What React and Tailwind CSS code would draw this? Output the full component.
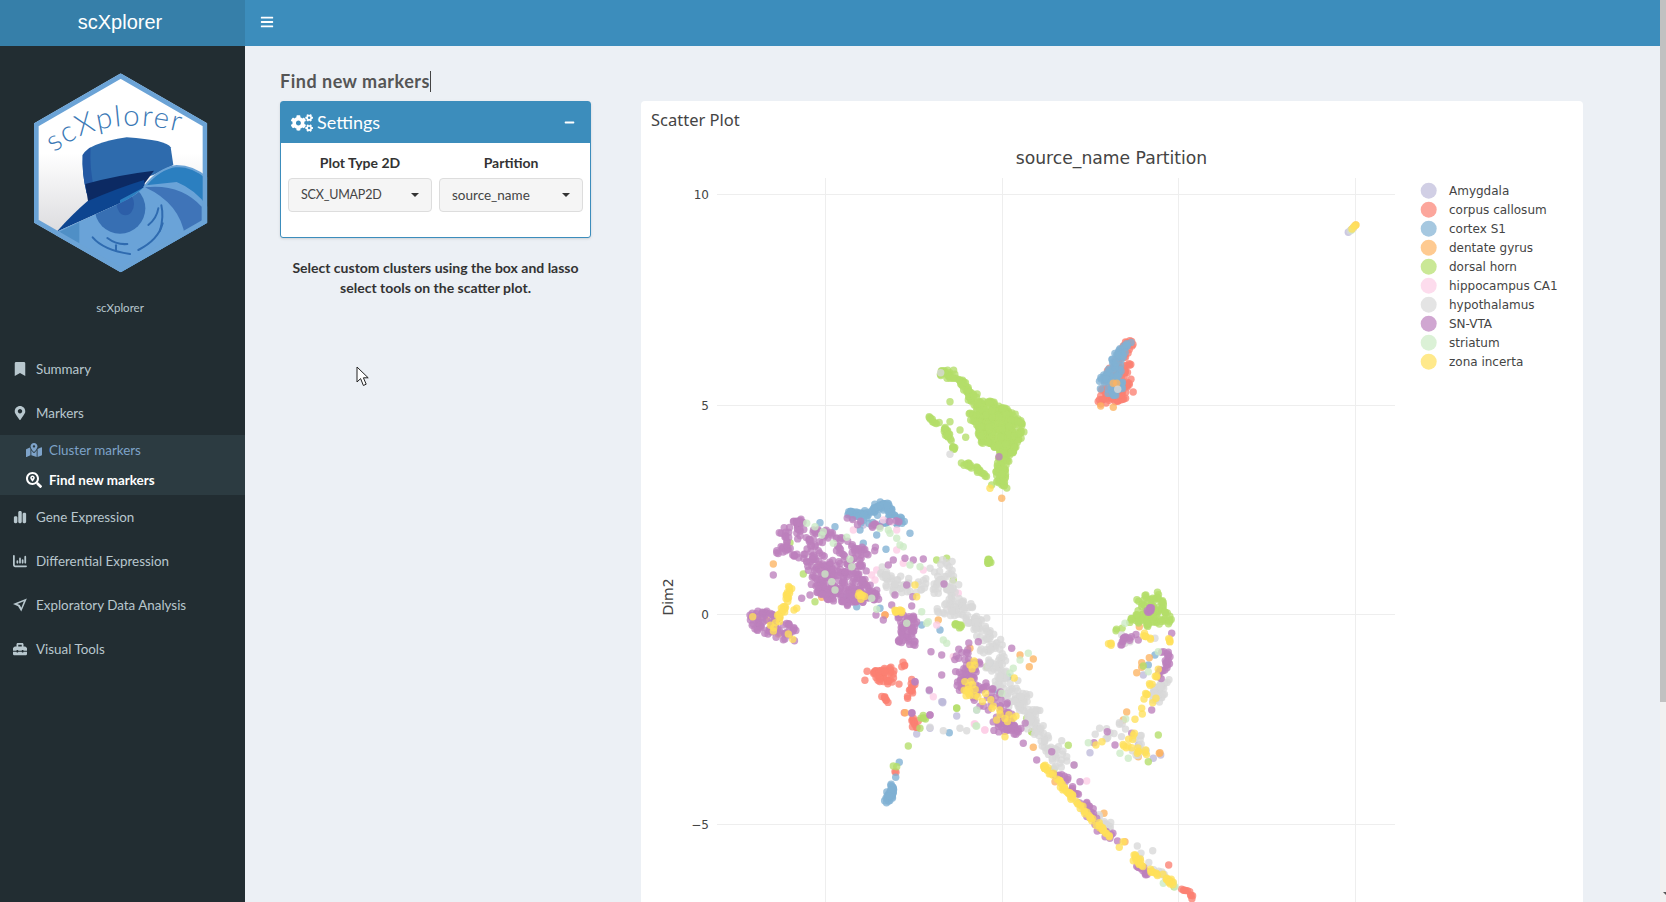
import React from "react";
import { FaBookmark, FaMapMarkerAlt, FaMapMarkedAlt, FaSearchLocation, FaToolbox, FaCogs, FaMinus, FaBars } from "react-icons/fa";
import { FaChartSimple, FaChartColumn } from "react-icons/fa6";

const COLORS = ["#BEBADA", "#FB8072", "#80B1D3", "#FDB462", "#B3DE69", "#FCCDE5", "#D9D9D9", "#BC80BD", "#CCEBC5", "#FFE05A"];
const NAMES = ["Amygdala", "corpus callosum", "cortex S1", "dentate gyrus", "dorsal horn", "hippocampus CA1", "hypothalamus", "SN-VTA", "striatum", "zona incerta"];
const [AM, CC, CX, DG, DH, HP, HY, SN, ST, ZI] = [0, 1, 2, 3, 4, 5, 6, 7, 8, 9];

let seed = 12345;
const rnd = () => {
  seed = (seed * 1664525 + 1013904223) % 4294967296;
  return seed / 4294967296;
};
const gauss = () => (rnd() + rnd() + rnd() - 1.5) / 1.5 * 1.6;

const raw = [];
const push = (t, x, y) => raw.push({ t, x, y });
const line = (t, n0, origin, p, s0 = 3) => {
  const n = Math.round(n0 * 1.3);
  const s = s0 * 1.2;
  const m = p.map(([x, y]) => [origin[0] + x / 3, origin[1] + y / 3]);
  const lens = [];
  let L = 0;
  for (let i = 1; i < m.length; i++) {
    const d = Math.hypot(m[i][0] - m[i - 1][0], m[i][1] - m[i - 1][1]);
    lens.push(d);
    L += d;
  }
  for (let k = 0; k < n; k++) {
    let r = rnd() * L;
    let i = 0;
    while (i < lens.length - 1 && r > lens[i]) {
      r -= lens[i];
      i++;
    }
    const f = r / lens[i];
    push(t, m[i][0] + (m[i + 1][0] - m[i][0]) * f + gauss() * s, m[i][1] + (m[i + 1][1] - m[i][1]) * f + gauss() * s);
  }
};
const poly = (t, n0, origin, p, jitter = 2) => {
  const n = Math.round(n0 * 1.35);
  const m = p.map(([x, y]) => [origin[0] + x / 3, origin[1] + y / 3]);
  const xs = m.map((a) => a[0]);
  const ys = m.map((a) => a[1]);
  const [x0, x1, y0, y1] = [Math.min(...xs), Math.max(...xs), Math.min(...ys), Math.max(...ys)];
  const inside = (x, y) => {
    let c = false;
    for (let i = 0, j = m.length - 1; i < m.length; j = i++) {
      if (m[i][1] > y !== m[j][1] > y && x < ((m[j][0] - m[i][0]) * (y - m[i][1])) / (m[j][1] - m[i][1]) + m[i][0]) c = !c;
    }
    return c;
  };
  let k = 0;
  let guard = 0;
  while (k < n && guard < n * 200) {
    guard++;
    const x = x0 + rnd() * (x1 - x0);
    const y = y0 + rnd() * (y1 - y0);
    if (inside(x, y)) {
      push(t, x + gauss() * jitter, y + gauss() * jitter);
      k++;
    }
  }
};
const dots = (t, origin, list) => list.forEach(([x, y]) => push(t, origin[0] + x / 3, origin[1] + y / 3));

// dorsal horn island
const Z8 = [900, 360];
line(DH, 60, Z8, [[125, 32], [190, 70], [215, 115], [250, 140]], 3.5);
poly(DH, 300, Z8, [[225, 125], [290, 125], [350, 165], [378, 200], [355, 250], [318, 320], [322, 388], [295, 370], [285, 310], [300, 270], [240, 240], [235, 195]], 1.2);
line(DH, 18, Z8, [[210, 160], [235, 190], [250, 240]], 3);
line(DH, 8, Z8, [[85, 175], [110, 188]], 1.6);
line(DH, 18, Z8, [[135, 200], [150, 240], [162, 270]], 2);
line(DH, 18, Z8, [[185, 308], [230, 325], [250, 345], [262, 348]], 2);
dots(DH, Z8, [[150, 125], [210, 160], [212, 180], [230, 195], [180, 210], [197, 232], [150, 185], [248, 250], [290, 365], [275, 375]]);
dots(HY, Z8, [[122, 38], [150, 283]]);
dots(SN, Z8, [[297, 290]]);
dots(ZI, Z8, [[270, 385]]);
dots(DG, Z8, [[305, 415]]);

// corpus / cortex island
const Z7 = [1060, 320];
poly(CC, 100, Z7, [[215, 50], [225, 60], [205, 100], [218, 130], [205, 150], [222, 215], [200, 245], [170, 250], [130, 250], [105, 270], [125, 215], [120, 190], [170, 110], [190, 70]], 1);
poly(CX, 70, Z7, [[200, 58], [214, 70], [190, 110], [190, 140], [198, 180], [178, 228], [130, 228], [115, 180], [140, 150], [165, 100]], 1);
dots(DG, Z7, [[160, 190], [170, 190], [122, 258], [160, 262]]);
dots(HY, Z7, [[173, 208]]);

// big central region
const Z5 = [720, 480];
line(CX, 70, Z5, [[385, 100], [450, 100], [495, 70], [520, 110], [550, 125]], 3);
poly(CX, 12, Z5, [[395, 100], [550, 110], [545, 140], [400, 130]], 1);
dots(CX, Z5, [[420, 150], [470, 165], [570, 160], [430, 190], [498, 208], [380, 350], [480, 385], [410, 380], [345, 140], [300, 128], [660, 450], [605, 435], [865, 590], [830, 630], [810, 550]]);
poly(SN, 240, Z5, [[180, 150], [230, 135], [330, 145], [400, 190], [480, 205], [430, 285], [495, 365], [400, 378], [300, 360], [278, 315], [258, 240], [170, 220]]);
poly(SN, 50, Z5, [[270, 240], [380, 250], [440, 300], [480, 360], [400, 370], [300, 350]], 1);
line(SN, 12, Z5, [[218, 125], [245, 125]], 1.6);
line(SN, 10, Z5, [[380, 125], [460, 130], [540, 125]], 3);
dots(SN, Z5, [[160, 285], [245, 355], [270, 345], [468, 405], [490, 420], [525, 345], [578, 350], [575, 378], [515, 375], [560, 315], [665, 525], [633, 515], [665, 585], [628, 630], [672, 312], [610, 237], [580, 240], [555, 235], [520, 240], [505, 255], [875, 505], [775, 485], [585, 605], [575, 700], [630, 705]]);
poly(SN, 55, Z5, [[85, 400], [150, 392], [230, 450], [236, 490], [150, 470], [105, 450]], 1.5);
line(ZI, 24, Z5, [[208, 315], [200, 370], [185, 400], [160, 445]], 2.6);
dots(ZI, Z5, [[98, 410], [230, 385], [222, 390], [205, 462], [218, 478]]);
dots(DG, Z5, [[115, 420], [140, 420], [175, 462], [160, 252], [300, 258], [305, 352], [435, 312], [495, 405]]);
line(HY, 150, Z5, [[650, 245], [680, 290], [705, 350], [745, 410], [800, 460], [825, 510], [830, 570], [880, 640], [940, 720]], 9);
line(HY, 45, Z5, [[480, 265], [510, 320], [590, 310], [680, 340]], 8);
line(HY, 22, Z5, [[650, 390], [720, 410], [800, 440]], 8);
poly(SN, 42, Z5, [[530, 400], [590, 410], [590, 500], [530, 490], [545, 450]], 1.5);
line(ZI, 7, Z5, [[522, 392], [552, 396]], 1.5);
line(ZI, 6, Z5, [[420, 345], [430, 352]], 2);
dots(ZI, Z5, [[590, 350], [585, 315], [883, 594]]);
line(CC, 36, Z5, [[445, 585], [520, 570], [470, 590], [530, 608]], 4);
line(CC, 10, Z5, [[575, 600], [578, 635], [562, 660]], 2.4);
line(CC, 5, Z5, [[485, 650], [505, 662]], 1.6);
line(CC, 3, Z5, [[545, 560], [555, 545]], 1.6);
dots(CC, Z5, [[495, 405], [553, 698], [580, 715]]);
line(SN, 90, Z5, [[710, 520], [770, 565], [720, 610], [800, 640], [850, 690], [860, 760]], 8);
line(ZI, 22, Z5, [[725, 525], [765, 555], [740, 640], [805, 655], [875, 720]], 5);
dots(DG, Z5, [[750, 505], [900, 525], [940, 537], [928, 560], [655, 420]]);
const stList = [[310, 155], [305, 165], [285, 140], [540, 195], [550, 200], [510, 160], [505, 150], [480, 145], [530, 175], [620, 430], [625, 425], [680, 490], [670, 480], [570, 255], [600, 260], [395, 260], [390, 238], [340, 190], [315, 282], [335, 305], [345, 330], [455, 355], [605, 395], [470, 388], [880, 565], [925, 520], [870, 580], [900, 540], [845, 640], [770, 690], [768, 738], [260, 130], [380, 172], [560, 430]];
dots(ST, Z5, stList);
const hpList = [[465, 300], [455, 285], [470, 270], [530, 210], [550, 250], [400, 150], [530, 150], [610, 270], [650, 435], [715, 340], [700, 530], [795, 750], [765, 732], [640, 650], [515, 125], [490, 120], [690, 380]];
dots(HP, Z5, hpList);
dots(AM, Z5, [[430, 135], [490, 130], [665, 665], [628, 632], [668, 668], [575, 700], [770, 690]]);
line(DH, 7, Z5, [[803, 238], [812, 250]], 1.6);
dots(DH, Z5, [[680, 235], [650, 240], [250, 282], [285, 365], [210, 188], [715, 435], [700, 300], [800, 560], [710, 684], [935, 755], [920, 715]]);
line(DH, 6, Z5, [[705, 430], [725, 440]], 2.4);

// tail
const Z6 = [880, 640];
line(HY, 50, Z6, [[430, 190], [470, 270], [540, 370]], 7);
line(HY, 20, Z6, [[600, 495], [700, 570]], 4);
line(HY, 8, Z6, [[770, 640], [850, 710]], 4);
dots(HY, Z6, [[483, 265], [545, 302], [560, 350], [583, 375], [772, 618], [818, 632], [190, 272], [240, 265], [260, 272], [150, 262]]);
line(SN, 34, Z6, [[520, 410], [560, 410], [660, 570], [700, 590]], 3.4);
line(SN, 12, Z6, [[775, 670], [800, 700]], 3);
line(SN, 22, Z6, [[350, 250], [400, 262], [430, 265]], 6);
dots(SN, Z6, [[430, 310], [515, 335], [470, 360], [600, 425], [582, 375], [96, 218], [150, 225], [105, 125]]);
line(ZI, 50, Z6, [[490, 375], [550, 440], [620, 520], [690, 590]], 1.6);
line(ZI, 12, Z6, [[765, 650], [790, 690]], 3);
line(ZI, 7, Z6, [[800, 690], [850, 708]], 2);
line(ZI, 10, Z6, [[850, 710], [885, 735]], 1.6);
dots(ZI, Z6, [[520, 400], [730, 605], [718, 622], [350, 240], [400, 235], [375, 290]]);
dots(DG, Z6, [[672, 520], [460, 322], [525, 425], [76, 218], [735, 605], [838, 340]]);
line(CC, 8, Z6, [[908, 745], [942, 773]], 1.6);
dots(CC, Z6, [[866, 675]]);
dots(HP, Z6, [[620, 423], [314, 270], [283, 252]]);
dots(ST, Z6, [[850, 730], [885, 740], [290, 258], [860, 720], [880, 730]]);
dots(DH, Z6, [[882, 740], [565, 316], [455, 275], [522, 387], [85, 318]]);
line(CX, 30, Z6, [[42, 435], [30, 465], [20, 480]], 2.6);
dots(CX, Z6, [[58, 367], [47, 412], [208, 278]]);
dots(DH, Z6, [[40, 378], [50, 380], [230, 205]]);
dots(CC, Z6, [[45, 395], [48, 397]]);
line(CC, 8, Z6, [[100, 235], [105, 265]], 3);
line(DH, 4, Z6, [[125, 220], [130, 240]], 2.4);
dots(DH, Z6, [[120, 265]]);
dots(AM, Z6, [[230, 228], [188, 185], [110, 282], [150, 265]]);

// right arc
const Z9 = [1080, 570];
poly(DH, 75, Z9, [[150, 85], [238, 65], [280, 160], [240, 165], [150, 165], [105, 182], [165, 130], [190, 100]], 1.5);
dots(HY, Z9, [[125, 195], [150, 215], [135, 220], [225, 205]]);
line(SN, 8, Z9, [[215, 115], [205, 122]], 1.6);
line(SN, 10, Z9, [[180, 190], [120, 218]], 3);
line(SN, 18, Z9, [[258, 238], [265, 290], [235, 322]], 3);
dots(SN, Z9, [[275, 190], [175, 210], [215, 420], [82, 485], [105, 525], [42, 518], [155, 490]]);
line(HY, 34, Z9, [[250, 340], [225, 385]], 5);
line(HY, 20, Z9, [[60, 510], [90, 490], [150, 480], [190, 560]], 7);
line(ZI, 3, Z9, [[85, 222], [100, 222]], 1.6);
line(ZI, 5, Z9, [[185, 190], [210, 208]], 1.6);
line(ZI, 3, Z9, [[268, 205], [272, 218]], 1.6);
line(ZI, 8, Z9, [[225, 320], [200, 370], [192, 390]], 2.4);
line(ZI, 12, Z9, [[170, 480], [130, 525], [200, 545]], 3);
dots(ZI, Z9, [[185, 415], [187, 432], [165, 448], [228, 385], [218, 398], [66, 515], [48, 525], [235, 298]]);
dots(DG, Z9, [[208, 263], [185, 292], [170, 308], [185, 278], [140, 426], [130, 450], [240, 548], [175, 560], [178, 170]]);
dots(CX, Z9, [[225, 255], [205, 285]]);
dots(ST, Z9, [[25, 518], [120, 550], [145, 565], [235, 245], [205, 305], [137, 447], [135, 160]]);
dots(AM, Z9, [[30, 548], [175, 525], [190, 315], [220, 565], [242, 555]]);
dots(DH, Z9, [[235, 495], [205, 575], [190, 288], [108, 182]]);

// lonely group at the upper right
dots(HY, [1340, 215], [[30, 48], [40, 40]]);
dots(AM, [1340, 215], [[25, 52], [33, 45]]);
dots(DG, [1340, 215], [[47, 30], [40, 38]]);
dots(ST, [1340, 215], [[35, 45]]);
dots(ZI, [1340, 215], [[36, 42], [43, 34], [48, 30]]);

// white gaps inside the big SN-VTA mass
const holes = [[325, 205, 24], [300, 170, 12], [440, 240, 16], [385, 235, 10], [250, 205, 8], [350, 300, 8]].map(([x, y, r]) => [720 + x / 3, 480 + y / 3, r / 3]);
const pts = raw
  .filter((p) => !(p.t === SN && holes.some(([x, y, r]) => Math.hypot(p.x - x, p.y - y) < r)))
  .sort((a, b) => a.t - b.t);

function Scatter() {
  return (
    <svg viewBox="641 139 942 763" className="block w-[942px] h-[763px] font-[family-name:'DejaVu_Sans',sans-serif]">
      {[825.5, 1002.5, 1178.5, 1355.5].map((x) => (
        <line key={x} x1={x} x2={x} y1={178} y2={902} stroke="#eeeeee" strokeWidth="1" />
      ))}
      {[194.5, 405.5, 614.5, 824.5].map((y) => (
        <line key={y} x1={717} x2={1395} y1={y} y2={y} stroke="#eeeeee" strokeWidth="1" />
      ))}
      <text x="1111.5" y="164" textAnchor="middle" fontSize="17.2" fill="#444444">source_name Partition</text>
      {[["10", 199], ["5", 410], ["0", 619], ["−5", 829]].map(([l, y]) => (
        <text key={l} x="709" y={y} textAnchor="end" fontSize="12" fill="#444444">{l}</text>
      ))}
      <text transform="translate(673 597) rotate(-90)" textAnchor="middle" fontSize="14" fill="#444444">Dim2</text>
      {pts.map((p, i) => (
        <circle key={i} cx={p.x.toFixed(1)} cy={p.y.toFixed(1)} r="3.7" fill={COLORS[p.t]} opacity="0.78" />
      ))}
      {NAMES.map((n, i) => (
        <g key={n}>
          <circle cx="1428.7" cy={190.7 + i * 19} r="8" fill={COLORS[i]} opacity="0.7" />
          <text x="1449" y={195 + i * 19} fontSize="12" fill="#444444">{n}</text>
        </g>
      ))}
    </svg>
  );
}

function Logo() {
  const hex = "302,40 562,190 562,488 302,637 42,488 42,190";
  return (
    <svg viewBox="0 0 600 660" className="block w-[200px] h-[220px]">
      <defs>
        <linearGradient id="lg" x1="0" y1="0" x2="0" y2="1">
          <stop offset="0" stopColor="#ffffff" />
          <stop offset="0.4" stopColor="#ffffff" />
          <stop offset="0.8" stopColor="#dcdcdf" />
        </linearGradient>
        <clipPath id="hx">
          <polygon points={hex} />
        </clipPath>
        <clipPath id="eye">
          <path d="M110 515 L310 425 Q345 408 375 380 Q415 335 470 330 Q520 330 560 365 L570 660 L0 660 Z" />
        </clipPath>
      </defs>
      <g clipPath="url(#hx)">
        <polygon points={hex} fill="url(#lg)" />
        <path d="M188 285 Q205 250 320 232 Q440 240 452 262 L460 315 L400 345 L200 400 Q185 340 188 285 Z" fill="#2e6bad" />
        <path d="M188 285 Q205 265 212 262 Q208 330 224 392 L200 400 Q185 340 188 285 Z" fill="#2459a3" />
        <path d="M196 372 Q290 345 402 332 L370 375 L205 430 Z" fill="#0c2a63" />
        <path d="M110 515 Q160 460 202 424 Q290 385 372 360 L375 380 Q345 408 310 425 Z" fill="#0d4590" />
        <path d="M375 380 Q415 325 470 318 Q525 318 570 365 L570 660 L300 660 L300 420 Z" fill="#2b7fc0" />
        <path d="M372 382 Q415 325 470 318 Q525 318 570 362" fill="none" stroke="#6ba3d6" strokeWidth="6" />
        <path d="M110 515 L310 425 Q345 408 378 376 L470 366 Q530 390 570 450 L570 660 L60 660 Z" fill="#6aa3d8" />
        <path d="M375 382 Q480 370 545 440 L545 500 L495 530 Q480 430 375 382 Z" fill="#3f74b8" />
        <path d="M118 515 L178 487 L178 560 Z" fill="#4f8fc6" />
        <g clipPath="url(#eye)">
          <circle cx="300" cy="445" r="76" fill="#376fb3" />
          <ellipse cx="316" cy="432" rx="26" ry="34" fill="#2c5ea8" />
        </g>
        <g fill="none" stroke="#2f6bb0" strokeWidth="6" strokeLinecap="round">
          <path d="M218 532 Q250 570 330 582" />
          <path d="M262 534 Q290 555 322 552" />
          <path d="M288 556 V572" />
          <path d="M355 570 Q415 540 428 490" />
          <path d="M385 495 Q410 475 415 445" />
          <path d="M424 436 Q432 470 420 512" />
        </g>
        <polygon points={hex} fill="none" stroke="#6ba3d6" strokeWidth="28" />
      </g>
      <path id="arc" d="M103 278 Q260 150 510 224" fill="none" />
      <text fontFamily="Lato, sans-serif" fill="#3a78b5" fontWeight="300" letterSpacing="5" fontSize="88">
        <textPath href="#arc">scXplorer</textPath>
      </text>
    </svg>
  );
}

function ExploreIcon() {
  return (
    <svg viewBox="0 0 16 14" className="w-[15px] h-[14px]" fill="currentColor">
      <path d="M14.8 0 L0 5.8 L5.4 8.2 L8.8 14 Z M4.6 5.9 L11.6 3 L8.9 10 L7.2 6.9 Z" fillRule="evenodd" />
    </svg>
  );
}

const NavItem = ({ icon, label }) => (
  <div className="flex items-center h-[44px] pl-[13px] text-[#b8c7ce]">
    <span className="w-[23px] flex items-center text-[14px]">{icon}</span>
    <span className="text-[13.4px]">{label}</span>
  </div>
);

function Select({ value, text }) {
  return (
    <div className="flex items-center justify-between h-[34px] bg-[#f5f5f5] border border-[#dddddd] rounded-[4px] pl-[12px] pr-[12px] text-[#444444]">
      <span className={text}>{value}</span>
      <span className="w-0 h-0 border-x-[4px] border-t-[4px] border-x-transparent border-t-[#333333]" />
    </div>
  );
}

export default function App() {
  return (
    <div className="relative flex w-[1666px] h-[902px] overflow-hidden bg-[#ecf0f5] font-[family-name:Lato,sans-serif]">
      <div className="flex flex-col flex-1 min-w-0">
        <header className="flex h-[46px] shrink-0 bg-[#3c8dbc] text-white">
          <div className="flex w-[245px] shrink-0 items-center justify-center pr-[5px] pb-[2px] bg-[#367fa9] text-[20px] font-[family-name:'Liberation_Sans',sans-serif]">
            scXplorer
          </div>
          <div className="flex items-center pl-[15px] pb-[2px] text-[14px]">
            <FaBars />
          </div>
        </header>
        <div className="flex flex-1 min-h-0">
          <aside className="flex flex-col w-[245px] shrink-0 bg-[#222d32]">
            <div className="pl-[20px] pt-[14px]">
              <Logo />
            </div>
            <div className="mt-[20px] pr-[5px] text-center text-[11.5px] leading-[16px] text-[#b8c7ce]">scXplorer</div>
            <div className="mt-[31px]">
              <NavItem icon={<FaBookmark />} label="Summary" />
              <NavItem icon={<FaMapMarkerAlt />} label="Markers" />
              <div className="flex flex-col justify-center h-[60px] bg-[#2c3b41] text-[13.4px]">
                <div className="flex items-center h-[30px] pl-[26px] text-[#7ea3c9]">
                  <span className="w-[23px] text-[16px]"><FaMapMarkedAlt /></span>
                  <span>Cluster markers</span>
                </div>
                <div className="flex items-center h-[30px] pl-[26px] font-bold text-white">
                  <span className="w-[23px] text-[16px]"><FaSearchLocation /></span>
                  <span>Find new markers</span>
                </div>
              </div>
              <NavItem icon={<FaChartSimple />} label="Gene Expression" />
              <NavItem icon={<FaChartColumn />} label="Differential Expression" />
              <NavItem icon={<ExploreIcon />} label="Exploratory Data Analysis" />
              <NavItem icon={<FaToolbox />} label="Visual Tools" />
            </div>
          </aside>
          <main className="flex-1 min-w-0 pl-[35px] pt-[23px]">
            <div className="flex items-center h-[24px] mb-[8px]">
              <h1 className="text-[18px] font-bold text-[#555555] tracking-[0.5px] leading-[24px]">Find new markers</h1>
              <span className="w-px h-[21px] bg-[#444444]" />
            </div>
            <div className="flex gap-[50px] items-start">
              <div className="w-[311px] shrink-0">
                <section className="h-[137px] bg-white border border-[#3c8dbc] rounded-[3px] shadow-sm">
                  <div className="flex items-center justify-between h-[41px] bg-[#3c8dbc] pl-[10px] pr-[15px] text-white">
                    <div className="flex items-center gap-[4px]">
                      <FaCogs className="text-[22px]" />
                      <span className="text-[18px]">Settings</span>
                    </div>
                    <FaMinus className="text-[11px]" />
                  </div>
                  <div className="grid grid-cols-2 gap-[7px] px-[7px] pt-[10px]">
                    <div>
                      <div className="h-[25px] text-center text-[14px] font-bold leading-[20px] text-[#333333]">Plot Type 2D</div>
                      <Select value="SCX_UMAP2D" text="text-[12.5px] tracking-[-0.2px]" />
                    </div>
                    <div>
                      <div className="h-[25px] text-center text-[14px] font-bold leading-[20px] text-[#333333]">Partition</div>
                      <Select value="source_name" text="text-[13.5px]" />
                    </div>
                  </div>
                </section>
                <p className="mt-[20px] text-center text-[14px] font-bold leading-[20px] text-[#333333]">
                  Select custom clusters using the box and lasso<br />select tools on the scatter plot.
                </p>
              </div>
              <section className="flex flex-col w-[942px] h-[801px] shrink-0 overflow-hidden bg-white rounded-t-[4px]">
                <div className="flex items-center h-[38px] pl-[10px] text-[16.5px] text-[#444444] font-[family-name:'Noto_Sans',sans-serif]">Scatter Plot</div>
                <Scatter />
              </section>
            </div>
          </main>
        </div>
      </div>
      <div className="flex flex-col w-[6px] shrink-0 overflow-hidden bg-[#f1f1f1]">
        <div className="h-[702px] bg-[#c1c1c1]" />
        <span className="mt-auto mb-[6px] ml-[3px] w-0 h-0 border-x-[4px] border-t-[4px] border-x-transparent border-t-[#555555]" />
      </div>
      <svg viewBox="0 0 14 21" className="absolute left-[356px] top-[366px] w-[14px] h-[21px]">
        <path d="M1 1 V16 L4.6 12.6 L7.4 19.5 L10.2 18.2 L7.4 11.8 L12.2 11.8 Z" fill="#ffffff" stroke="#222222" strokeWidth="1" strokeLinejoin="round" />
      </svg>
    </div>
  );
}
